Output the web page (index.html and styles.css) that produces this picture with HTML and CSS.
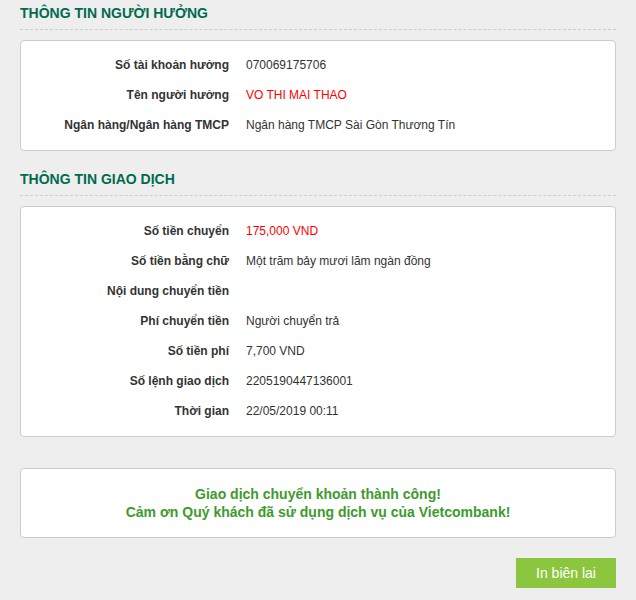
FILE: index.html
```html
<!DOCTYPE html>
<html lang="vi">
<head>
<meta charset="utf-8">
<title>Vietcombank - Chuyển khoản</title>
<link rel="stylesheet" href="styles.css">
</head>
<body>
<div class="page">
  <h2 class="section-title">THÔNG TIN NGƯỜI HƯỞNG</h2>
  <div class="card info">
    <div class="row"><div class="label">Số tài khoản hưởng</div><div class="value">070069175706</div></div>
    <div class="row"><div class="label">Tên người hưởng</div><div class="value red">VO THI MAI THAO</div></div>
    <div class="row"><div class="label">Ngân hàng/Ngân hàng TMCP</div><div class="value">Ngân hàng TMCP Sài Gòn Thương Tín</div></div>
  </div>

  <h2 class="section-title second">THÔNG TIN GIAO DỊCH</h2>
  <div class="card info">
    <div class="row"><div class="label">Số tiền chuyển</div><div class="value red">175,000 VND</div></div>
    <div class="row"><div class="label">Số tiền bằng chữ</div><div class="value">Một trăm bảy mươi lăm ngàn đồng</div></div>
    <div class="row"><div class="label">Nội dung chuyển tiền</div><div class="value"></div></div>
    <div class="row"><div class="label">Phí chuyển tiền</div><div class="value">Người chuyển trả</div></div>
    <div class="row"><div class="label">Số tiền phí</div><div class="value">7,700 VND</div></div>
    <div class="row"><div class="label">Số lệnh giao dịch</div><div class="value">2205190447136001</div></div>
    <div class="row"><div class="label">Thời gian</div><div class="value">22/05/2019 00:11</div></div>
  </div>

  <div class="card success">
    <p>Giao dịch chuyển khoản thành công!</p>
    <p>Cảm ơn Quý khách đã sử dụng dịch vụ của Vietcombank!</p>
  </div>

  <div class="actions">
    <button class="btn-print" type="button">In biên lai</button>
  </div>
</div>
</body>
</html>
```

FILE: styles.css
```css
html, body {
  margin: 0;
  padding: 0;
  background: #eeeeee;
}

body {
  font-family: "Liberation Sans", Arial, sans-serif;
  color: #333333;
}

.page {
  padding: 5px 20px 0 20px;
}

.section-title {
  margin: 0;
  font-size: 14px;
  line-height: 16px;
  font-weight: bold;
  color: #006b4f;
  padding: 0 0 8px 0;
  border-bottom: 1px dashed #cccccc;
}

.section-title.second {
  margin-top: 20px;
}

.card {
  background: #ffffff;
  border: 1px solid #cccccc;
  border-radius: 4px;
  margin-top: 10px;
}

.info {
  padding: 9px 0 10px 0;
}

.row {
  display: grid;
  grid-template-columns: 208px 1fr;
  column-gap: 17px;
  height: 30px;
  line-height: 30px;
  font-size: 12px;
}

.label {
  text-align: right;
  font-weight: bold;
  color: #333333;
}

.value {
  color: #333333;
}

.value.red {
  color: #ff0000;
}

.success {
  margin-top: 31px;
  padding: 16px 0;
  text-align: center;
}

.success p {
  margin: 0;
  font-size: 14px;
  line-height: 18px;
  font-weight: bold;
  color: #3d9a2d;
}

.actions {
  display: flex;
  justify-content: flex-end;
  margin-top: 20px;
}

.btn-print {
  width: 100px;
  height: 30px;
  border: none;
  background: #8cc63f;
  color: #ffffff;
  font-family: "Liberation Sans", Arial, sans-serif;
  font-size: 14px;
  padding: 0;
}
```
